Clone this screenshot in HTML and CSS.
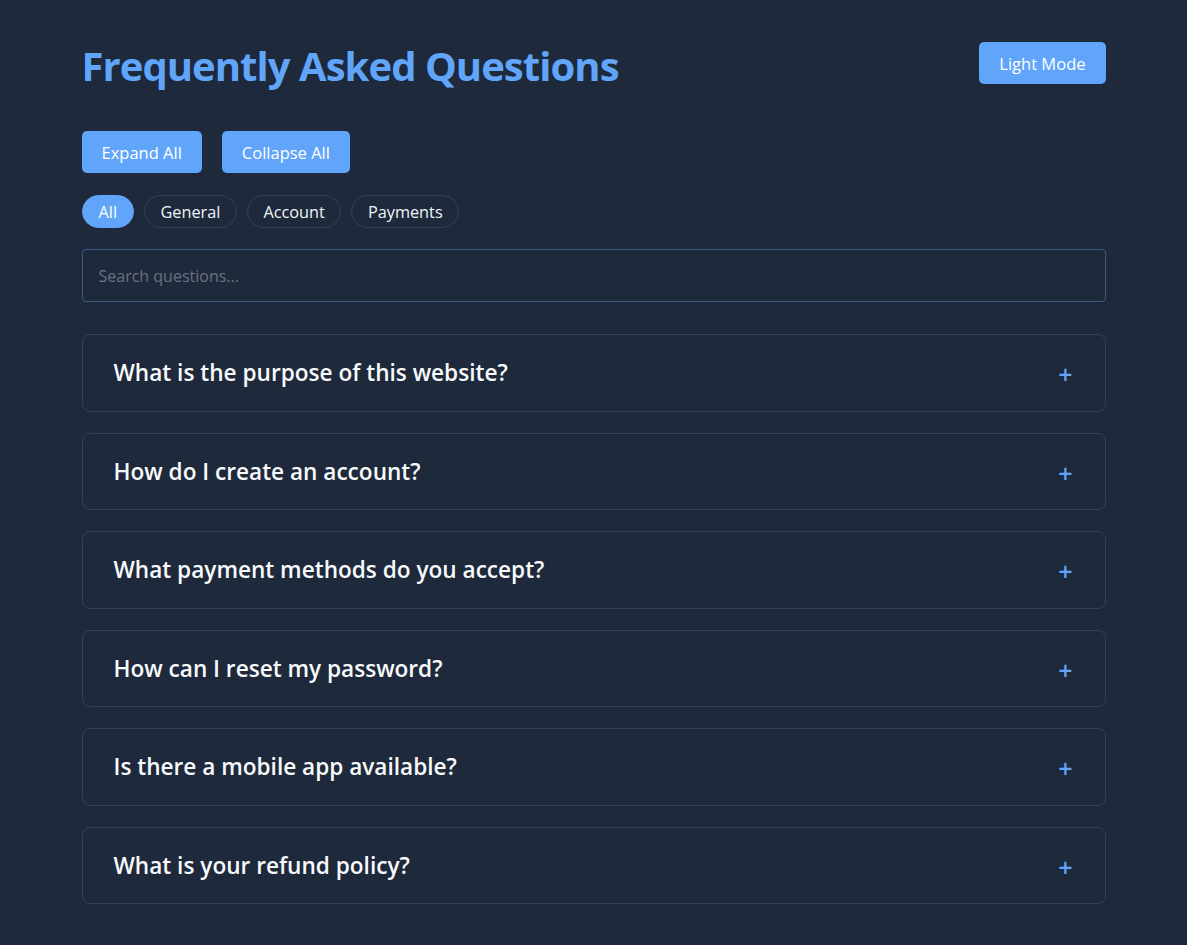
FILE: index.html
```html
<!DOCTYPE html>
<html lang="en">
<head>
<meta charset="utf-8">
<title>FAQ</title>
<link rel="stylesheet" href="styles.css">
</head>
<body>
<div class="container">
  <header class="header">
    <h1 class="title">Frequently Asked Questions</h1>
    <button class="btn">Light Mode</button>
  </header>
  <div class="actions">
    <button class="btn">Expand All</button>
    <button class="btn">Collapse All</button>
  </div>
  <div class="chips">
    <button class="chip active">All</button>
    <button class="chip">General</button>
    <button class="chip">Account</button>
    <button class="chip">Payments</button>
  </div>
  <input class="search" type="text" placeholder="Search questions...">
  <div class="faq-list">
    <div class="faq"><span class="q">What is the purpose of this website?</span><span class="plus">+</span></div>
    <div class="faq"><span class="q">How do I create an account?</span><span class="plus">+</span></div>
    <div class="faq"><span class="q">What payment methods do you accept?</span><span class="plus">+</span></div>
    <div class="faq"><span class="q">How can I reset my password?</span><span class="plus">+</span></div>
    <div class="faq"><span class="q">Is there a mobile app available?</span><span class="plus">+</span></div>
    <div class="faq"><span class="q">What is your refund policy?</span><span class="plus">+</span></div>
  </div>
</div>
</body>
</html>
```

FILE: styles.css
```css
* { box-sizing: border-box; }
html, body { margin: 0; padding: 0; }
body {
  background: #1e293b;
  color: #f1f5f9;
  font-family: "Open Sans", "Noto Sans", sans-serif;
}
.container {
  max-width: 1024px;
  margin: 0 auto;
  padding-top: 42px;
}
.header {
  display: flex;
  justify-content: space-between;
  align-items: flex-start;
  margin-bottom: 41px;
}
.title {
  margin: 0;
  font-size: 40px;
  font-weight: 700;
  color: #60a5fa;
  line-height: 48px;
  letter-spacing: -0.95px;
}
.btn {
  background: #60a5fa;
  color: #fff;
  border: none;
  border-radius: 5px;
  font-family: inherit;
  font-size: 16.5px;
  height: 42px;
  padding: 0 20px;
}
.actions {
  display: flex;
  gap: 20px;
  margin-bottom: 22px;
}
.chips {
  display: flex;
  gap: 10px;
  margin-bottom: 21px;
}
.chip {
  background: transparent;
  color: #f1f5f9;
  border: 1px solid #334155;
  border-radius: 999px;
  font-family: inherit;
  font-size: 16.3px;
  height: 33px;
  padding: 0 15.5px;
}
.chip.active {
  background: #60a5fa;
  border-color: #60a5fa;
  color: #fff;
  padding: 0 16px;
}
.search {
  display: block;
  width: 100%;
  height: 53px;
  background: #1e293b;
  border: 1px solid #3d5a85;
  border-radius: 4px;
  padding: 0 16px;
  font-family: inherit;
  font-size: 16px;
  color: #f1f5f9;
  outline: none;
  margin-bottom: 32px;
}
.search::placeholder { color: #6b7280; }
.faq-list {
  display: flex;
  flex-direction: column;
  gap: 21px;
}
.faq {
  display: flex;
  justify-content: space-between;
  align-items: center;
  height: 77.5px;
  border: 1px solid #334155;
  border-radius: 8px;
  padding: 0 32px 0 31px;
}
.q {
  font-size: 22.6px;
  font-weight: 600;
  color: #f8fafc;
}
.plus {
  color: #60a5fa;
  font-size: 25px;
  font-weight: 600;
  line-height: 1;
  padding-top: 4px;
}
```
